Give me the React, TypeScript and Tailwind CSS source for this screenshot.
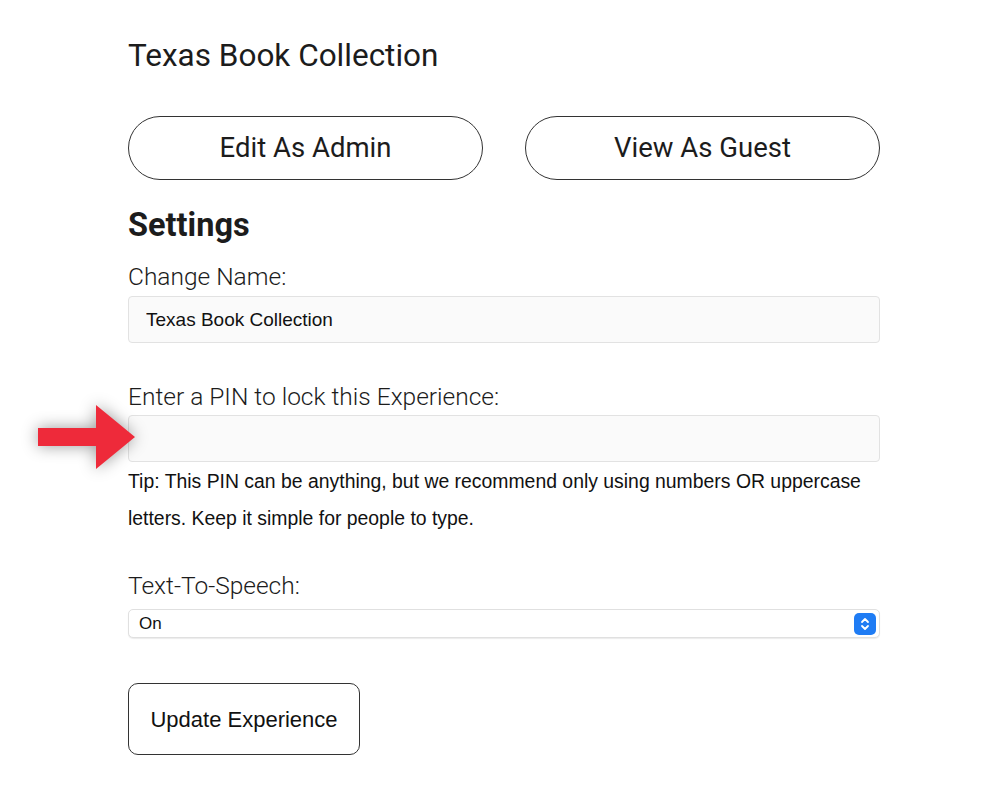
import React from 'react';

const PinArrow: React.FC = () => (
  <svg
    className="absolute left-[36px] top-[403px] drop-shadow-[0_0_8px_rgba(0,0,0,0.4)]"
    width="102"
    height="68"
    viewBox="0 0 102 68"
  >
    <path d="M2 25 H60 V2 L99 34 L60 66 V43 H2 Z" fill="#ee2a3a" />
  </svg>
);

export default function App() {
  return (
    <div className="relative min-h-[805px] w-[1000px] bg-white text-[#1c1c1c] font-['Roboto',sans-serif]">
      <PinArrow />
      <div className="ml-[128px] w-[752px] pt-[37px]">
        <h1 className="text-[31.5px] leading-[38px]">Texas Book Collection</h1>

        <div className="mt-[41px] flex gap-[42px]">
          <button className="h-[64px] flex-1 rounded-full border-[1.5px] border-[#333] text-[27.5px] text-[#1c1c1c]">
            Edit As Admin
          </button>
          <button className="h-[64px] flex-1 rounded-full border-[1.5px] border-[#333] text-[27.5px] text-[#1c1c1c]">
            View As Guest
          </button>
        </div>

        <h2 className="mt-[26px] text-[32.5px] font-bold leading-[38px]">Settings</h2>

        <label className="mt-[19px] block text-[24.5px] font-light leading-[28px]">Change Name:</label>
        <input
          readOnly
          value="Texas Book Collection"
          className="mt-[5px] block h-[47px] w-full rounded-[4px] border border-[#e2e2e2] bg-[#fafafa] px-[17px] font-['Liberation_Sans',sans-serif] text-[19px] text-[#111] outline-none"
        />

        <label className="mt-[40px] block text-[24.5px] font-light leading-[28px]">
          Enter a PIN to lock this Experience:
        </label>
        <input
          readOnly
          className="mt-[4px] block h-[47px] w-full rounded-[4px] border border-[#e2e2e2] bg-[#fafafa] px-[17px] font-['Liberation_Sans',sans-serif] text-[19px] outline-none"
        />
        <p className="mt-[1px] font-['Liberation_Sans',sans-serif] text-[19.4px] leading-[37px] text-[#111]">
          Tip: This PIN can be anything, but we recommend only using numbers OR uppercase letters. Keep it
          simple for people to type.
        </p>

        <label className="mt-[35px] block text-[24.5px] font-light leading-[28px]">Text-To-Speech:</label>
        <div className="mt-[9px] flex h-[29px] w-full items-center justify-between rounded-[5px] border border-[#e0e0e0] bg-white pl-[10px] pr-[3px] shadow-[0_1px_1px_rgba(0,0,0,0.08)] font-['Liberation_Sans',sans-serif] text-[17px] text-[#111]">
          <span>On</span>
          <span className="flex h-[22px] w-[22px] items-center justify-center rounded-[5px] bg-[#1f7cf4]">
            <svg width="10" height="14" viewBox="0 0 10 14" fill="none" stroke="white" strokeWidth="1.8" strokeLinecap="round" strokeLinejoin="round">
              <path d="M2 5 L5 2 L8 5" />
              <path d="M2 9 L5 12 L8 9" />
            </svg>
          </span>
        </div>

        <button className="mt-[45px] h-[72px] w-[232px] rounded-[10px] border-[1.5px] border-[#333] font-['Liberation_Sans',sans-serif] text-[22px] text-[#111]">
          Update Experience
        </button>
      </div>
    </div>
  );
}
